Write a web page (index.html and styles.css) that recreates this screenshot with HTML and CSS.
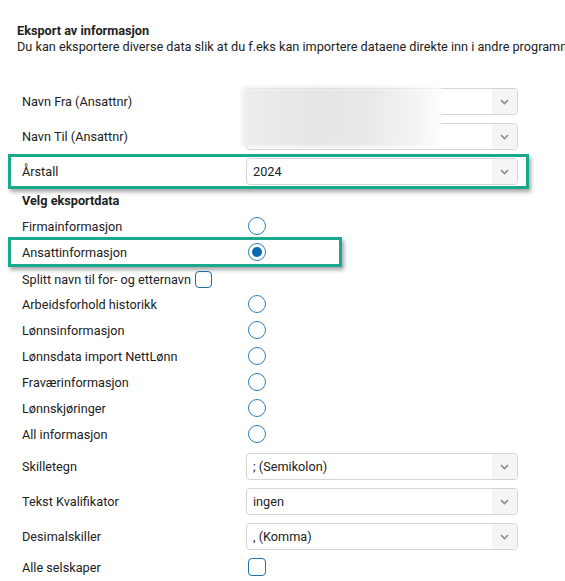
FILE: index.html
```html
<!DOCTYPE html>
<html lang="no">
<head>
<meta charset="utf-8">
<title>Eksport av informasjon</title>
<link rel="stylesheet" href="styles.css">
</head>
<body>
<div class="page">
  <div class="intro">
    <div class="intro-title">Eksport av informasjon</div>
    <div class="intro-text">Du kan eksportere diverse data slik at du f.eks kan importere dataene direkte inn i andre programmer.</div>
  </div>

  <div class="form">
    <div class="blur"></div>

    <div class="row sel-row">
      <div class="label">Navn Fra (Ansattnr)</div>
      <div class="select"><span class="value"></span><span class="arrow"><svg width="9" height="6" viewBox="0 0 9 6"><path d="M1 1l3.5 3.5L8 1" fill="none" stroke="#8a8a8a" stroke-width="1.6"/></svg></span></div>
    </div>
    <div class="row sel-row">
      <div class="label">Navn Til (Ansattnr)</div>
      <div class="select"><span class="value"></span><span class="arrow"><svg width="9" height="6" viewBox="0 0 9 6"><path d="M1 1l3.5 3.5L8 1" fill="none" stroke="#8a8a8a" stroke-width="1.6"/></svg></span></div>
    </div>
    <div class="hl hl-wide">
      <div class="row sel-row tight">
        <div class="label">Årstall</div>
        <div class="select"><span class="value">2024</span><span class="arrow"><svg width="9" height="6" viewBox="0 0 9 6"><path d="M1 1l3.5 3.5L8 1" fill="none" stroke="#8a8a8a" stroke-width="1.6"/></svg></span></div>
      </div>
    </div>

    <div class="section-title">Velg eksportdata</div>

    <div class="row opt-row">
      <div class="label">Firmainformasjon</div>
      <span class="radio"></span>
    </div>
    <div class="hl hl-narrow">
      <div class="row opt-row tight">
        <div class="label">Ansattinformasjon</div>
        <span class="radio checked"></span>
      </div>
    </div>
    <div class="row opt-row split">
      <span class="inline-label">Splitt navn til for- og etternavn</span>
      <span class="checkbox small"></span>
    </div>
    <div class="row opt-row">
      <div class="label">Arbeidsforhold historikk</div>
      <span class="radio"></span>
    </div>
    <div class="row opt-row">
      <div class="label">Lønnsinformasjon</div>
      <span class="radio"></span>
    </div>
    <div class="row opt-row">
      <div class="label">Lønnsdata import NettLønn</div>
      <span class="radio"></span>
    </div>
    <div class="row opt-row">
      <div class="label">Fraværinformasjon</div>
      <span class="radio"></span>
    </div>
    <div class="row opt-row">
      <div class="label">Lønnskjøringer</div>
      <span class="radio"></span>
    </div>
    <div class="row opt-row">
      <div class="label">All informasjon</div>
      <span class="radio"></span>
    </div>

    <div class="row sel-row first-after">
      <div class="label">Skilletegn</div>
      <div class="select"><span class="value">; (Semikolon)</span><span class="arrow"><svg width="9" height="6" viewBox="0 0 9 6"><path d="M1 1l3.5 3.5L8 1" fill="none" stroke="#8a8a8a" stroke-width="1.6"/></svg></span></div>
    </div>
    <div class="row sel-row">
      <div class="label">Tekst Kvalifikator</div>
      <div class="select"><span class="value">ingen</span><span class="arrow"><svg width="9" height="6" viewBox="0 0 9 6"><path d="M1 1l3.5 3.5L8 1" fill="none" stroke="#8a8a8a" stroke-width="1.6"/></svg></span></div>
    </div>
    <div class="row sel-row">
      <div class="label">Desimalskiller</div>
      <div class="select"><span class="value">, (Komma)</span><span class="arrow"><svg width="9" height="6" viewBox="0 0 9 6"><path d="M1 1l3.5 3.5L8 1" fill="none" stroke="#8a8a8a" stroke-width="1.6"/></svg></span></div>
    </div>
    <div class="row opt-row last">
      <div class="label">Alle selskaper</div>
      <span class="checkbox"></span>
    </div>
  </div>
</div>
</body>
</html>
```

FILE: styles.css
```css
html, body {
  margin: 0;
  padding: 0;
  background: #fff;
}
body {
  font-family: Roboto, "Noto Sans", "Liberation Sans", sans-serif;
  font-size: 12.7px;
  color: #222;
  overflow: hidden;
}
.page {
  width: 565px;
  height: 581px;
  overflow: hidden;
}
.intro {
  padding: 23px 0 0 17px;
  line-height: 16px;
  white-space: nowrap;
}
.intro-title {
  font-weight: 700;
}
.form {
  position: relative;
  padding: 33px 0 0 22px;
}
.blur {
  position: absolute;
  left: 242px;
  top: 32px;
  width: 199px;
  height: 60px;
  background: linear-gradient(to right, #eeeeee 0%, #e6e6e6 35%, #e9e9e9 65%, #f3f3f3 85%, #fdfdfd 100%);
  filter: blur(2px);
  z-index: 2;
}
.row {
  display: flex;
  align-items: center;
}
.label {
  flex: 0 0 224px;
}
.sel-row {
  height: 27px;
  margin-bottom: 8px;
}
.sel-row.tight {
  margin-bottom: 0;
}
.sel-row.first-after {
  margin-top: 6px;
}
.select {
  width: 272px;
  height: 27px;
  box-sizing: border-box;
  border: 1px solid #d4d4d4;
  border-radius: 4px;
  display: flex;
  align-items: center;
  overflow: hidden;
  background: #fff;
}
.select .value {
  flex: 1;
  padding-left: 6px;
  color: #222;
}
.select .arrow {
  width: 25px;
  height: 100%;
  background: #f5f5f5;
  display: flex;
  align-items: center;
  justify-content: center;
}
.hl {
  margin-left: -14px;
  padding: 1px 0 1px 11px;
  border: 3px solid #1aaa8b;
  box-sizing: border-box;
  box-shadow: 2px 3px 4px rgba(0, 0, 0, 0.35);
}
.hl-wide {
  width: 521px;
  height: 35px;
  margin-top: -4px;
}
.hl-narrow {
  width: 334px;
  height: 30px;
  margin-top: -2px;
  padding: 0 0 0 11px;
}
.hl-narrow .opt-row {
  height: 24px;
}
.section-title {
  font-weight: 700;
  line-height: 16px;
  margin-top: 4px;
  margin-bottom: 4px;
}
.opt-row {
  height: 26px;
}
.opt-row.last {
  height: 18px;
}
.radio {
  width: 18px;
  height: 18px;
  box-sizing: border-box;
  border: 1.5px solid #2b80b9;
  border-radius: 50%;
  margin-left: 2px;
  display: flex;
  align-items: center;
  justify-content: center;
}
.radio.checked::after {
  content: "";
  width: 10px;
  height: 10px;
  border-radius: 50%;
  background: #0b6aad;
}
.split {
  height: 24px;
}
.split .inline-label {
  margin-right: 4px;
}
.checkbox {
  width: 18px;
  height: 18px;
  box-sizing: border-box;
  border: 1.5px solid #1f6fa8;
  border-radius: 4px;
  margin-left: 2px;
}
.checkbox.small {
  width: 17px;
  height: 17px;
  margin-left: 0;
  margin-top: 1px;
}
```
